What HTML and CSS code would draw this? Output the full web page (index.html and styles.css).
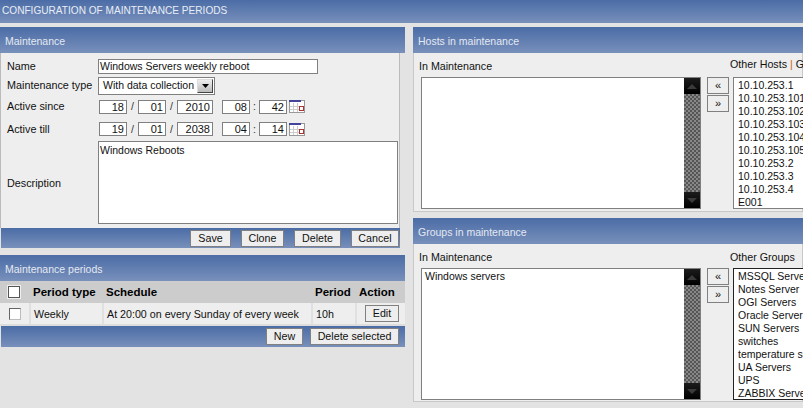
FILE: index.html
```html
<!DOCTYPE html>
<html lang="en">
<head>
<meta charset="utf-8">
<title>Configuration of maintenance periods</title>
<link rel="stylesheet" href="styles.css">
</head>
<body>
<header class="title bar-blue">CONFIGURATION OF MAINTENANCE PERIODS</header>
<main class="columns">
  <div class="col-left">
    <section class="panel form-panel">
      <h2 class="bar-blue head">Maintenance</h2>
      <div class="form-body">
        <div class="row r-name"><label>Name</label><span class="input wide">Windows Servers weekly reboot</span></div>
        <div class="row r-type"><label>Maintenance type</label>
          <span class="select">With data collection<span class="sel-btn"><svg width="7" height="4" viewBox="0 0 7 4"><path d="M0 0h7L3.500 4z" fill="#000"/></svg></span></span></div>
        <div class="row r-date"><label>Active since</label>
          <span class="date">
            <span class="input num d">18</span><i>/</i><span class="input num d">01</span><i>/</i><span class="input num y">2010</span>
            <span class="input num d h">08</span><i>:</i><span class="input num d">42</span>
            <svg class="cal" width="16" height="13" viewBox="0 0 16 13"><rect x="0.500" y="0.500" width="15" height="12" fill="#fff" stroke="#999"/><path d="M4.500 3v9M8.500 3v9M1 6.500h14M1 9.500h14" stroke="#ccc" fill="none"/><rect width="12" height="2" fill="#44449a" x="0"/><rect x="10.500" y="6.500" width="4" height="4" fill="#fff" stroke="#a33"/></svg>
          </span></div>
        <div class="row r-date r-till"><label>Active till</label>
          <span class="date">
            <span class="input num d">19</span><i>/</i><span class="input num d">01</span><i>/</i><span class="input num y">2038</span>
            <span class="input num d h">04</span><i>:</i><span class="input num d">14</span>
            <svg class="cal" width="16" height="13" viewBox="0 0 16 13"><rect x="0.500" y="0.500" width="15" height="12" fill="#fff" stroke="#999"/><path d="M4.500 3v9M8.500 3v9M1 6.500h14M1 9.500h14" stroke="#ccc" fill="none"/><rect width="12" height="2" fill="#44449a" x="0"/><rect x="10.500" y="6.500" width="4" height="4" fill="#fff" stroke="#a33"/></svg>
          </span></div>
        <div class="row r-desc"><label>Description</label><span class="textarea">Windows Reboots</span></div>
      </div>
      <div class="bar-blue foot foot-form">
        <button class="btn b-save">Save</button><button class="btn b-clone">Clone</button><button class="btn b-del">Delete</button><button class="btn b-cancel">Cancel</button>
      </div>
    </section>
    <section class="panel periods">
      <h2 class="bar-blue head">Maintenance periods</h2>
      <table class="tbl">
        <thead><tr><th class="c1"><span class="check big"></span></th><th class="c2">Period type</th><th class="c3">Schedule</th><th class="c4">Period</th><th class="c5">Action</th></tr></thead>
        <tbody><tr><td class="c1"><span class="check"></span></td><td>Weekly</td><td>At 20:00 on every Sunday of every week</td><td>10h</td><td class="c5"><button class="btn edit">Edit</button></td></tr></tbody>
      </table>
      <div class="bar-blue foot foot-periods">
        <button class="btn b-new">New</button><button class="btn b-delsel">Delete selected</button>
      </div>
    </section>
  </div>
  <div class="col-right">
    <section class="panel hosts">
      <h2 class="bar-blue head">Hosts in maintenance</h2>
      <div class="picker">
        <div class="pick-left">
          <div class="pick-label">In Maintenance</div>
          <div class="listbox">
            <div class="list-text"></div>
            <div class="scroll"><span class="sb"><svg width="10" height="5" viewBox="0 0 10 5"><path d="M0 5L5 0l5 5z" fill="#3a3a3a"/></svg></span><span class="sb"><svg width="10" height="5" viewBox="0 0 10 5"><path d="M0 0l5 5 5-5z" fill="#3a3a3a"/></svg></span></div>
          </div>
        </div>
        <div class="movers"><button class="mv">«</button><button class="mv">»</button></div>
        <div class="pick-right">
          <div class="pick-label other">Other Hosts <span class="sep">|</span> Groups</div>
          <div class="optlist">10.10.253.1<br>10.10.253.101<br>10.10.253.102<br>10.10.253.103<br>10.10.253.104<br>10.10.253.105<br>10.10.253.2<br>10.10.253.3<br>10.10.253.4<br>E001</div>
        </div>
      </div>
    </section>
    <section class="panel groups">
      <h2 class="bar-blue head">Groups in maintenance</h2>
      <div class="picker tall">
        <div class="pick-left">
          <div class="pick-label">In Maintenance</div>
          <div class="listbox">
            <div class="list-text">Windows servers</div>
            <div class="scroll"><span class="sb"><svg width="10" height="5" viewBox="0 0 10 5"><path d="M0 5L5 0l5 5z" fill="#3a3a3a"/></svg></span><span class="sb"><svg width="10" height="5" viewBox="0 0 10 5"><path d="M0 0l5 5 5-5z" fill="#3a3a3a"/></svg></span></div>
          </div>
        </div>
        <div class="movers"><button class="mv">«</button><button class="mv">»</button></div>
        <div class="pick-right">
          <div class="pick-label other">Other Groups</div>
          <div class="optlist dark">MSSQL Servers<br>Notes Server<br>OGI Servers<br>Oracle Servers<br>SUN Servers<br>switches<br>temperature sensors<br>UA Servers<br>UPS<br>ZABBIX Servers</div>
        </div>
      </div>
    </section>
  </div>
</main>
</body>
</html>
```
FILE: styles.css
```css
* { box-sizing: border-box; }
html, body { margin: 0; height: 408px; overflow: hidden; }
body { background: #e3e3e3; font: 10.500px/13px "Liberation Sans", Arial, sans-serif; color: #111; }
.bar-blue { background: linear-gradient(#4b6ca6, #7890bb); }
.title { height: 23px; padding: 3px 0 0 2px; color: #e8edf5; font-size: 10.100px; line-height: 15px; white-space: nowrap; }
.columns { display: grid; grid-template-columns: 405px 390px; column-gap: 8px; padding-top: 4px; width: 803px; overflow: hidden; }
.col-left, .col-right { display: flex; flex-direction: column; }
.head { height: 26px; margin: 0; padding: 7px 0 0 5px; font-size: 10.500px; line-height: 15px; font-weight: normal; color: #e4e9f2; }

.form-panel { height: 221px; display: flex; flex-direction: column; }
.form-body { height: 175px; width: 400px; background: #eee; border: 1px solid #bbb; border-top: 0; border-bottom: 0; padding: 4px 0 0 6px; }
.row { display: flex; align-items: center; }
.row label { flex: none; width: 91px; font-size: 10.800px; }
.r-name { height: 18px; }
.r-type { height: 21px; }
.r-date { height: 21px; }
.r-till { height: 22px; margin-top: 1px; }
.r-desc { height: 83px; margin-top: 1px; }
.r-desc label { padding-top: 2px; }
.input { display: block; background: #fff; border: 1px solid #808080; color: #111; white-space: nowrap; }
.wide { width: 220px; height: 15px; padding-left: 1px; line-height: 13px; }
.select { display: flex; align-items: center; justify-content: space-between; width: 117px; height: 18px; padding-left: 4px; background: #fff; border: 1px solid #808080; white-space: nowrap; }
.sel-btn { display: flex; align-items: center; justify-content: center; width: 16px; height: 14px; margin-right: 1px; background: linear-gradient(#eee, #bbb); border: 1px solid #444; border-top-color: #ddd; border-left-color: #ddd; }
.date { display: flex; align-items: center; margin-left: 1px; }
.date i { font-style: normal; width: 11px; text-align: center; color: #333; }
.num { height: 14px; text-align: right; padding-right: 2px; font-size: 11px; line-height: 12px; }
.d { width: 28px; }
.y { width: 36px; }
.h { margin-left: 9px; }
.date i:nth-of-type(3) { width: 9px; }
.cal { margin-left: 2px; }
.textarea { display: block; width: 300px; height: 83px; background: #fff; border: 1px solid #808080; padding: 2px 1px; }

.foot { display: flex; justify-content: flex-end; align-items: center; }
.foot-form { height: 20px; width: 399px; margin-left: 1px; padding-right: 1px; }
.foot-periods { height: 21px; width: 404px; margin-left: 1px; padding-right: 6px; }
.btn { height: 17px; padding: 0; background: #eee; border: 1px solid #808080; font: 10.700px/13px "Liberation Sans", Arial, sans-serif; color: #111; }
.b-save { width: 41px; margin-right: 10px; }
.b-clone { width: 43px; margin-right: 10px; }
.b-del { width: 47px; margin-right: 10px; }
.b-cancel { width: 48px; }
.b-new { width: 37px; margin-right: 7px; }
.b-delsel { width: 89px; }

.periods { margin-top: 7px; }
.tbl { width: 405px; height: 45px; border-collapse: collapse; table-layout: fixed; }
.tbl th { height: 22px; background: #ccc; text-align: left; font-size: 11.500px; padding: 0 0 0 3px; color: #000; }
.tbl td { height: 21px; background: #eee; border-right: 2px solid #e0e0e0; border-bottom: 2px solid #ddd; padding: 1px 0 0 3px; font-size: 10.700px; white-space: nowrap; }
.c1 { width: 30px; }
.c2 { width: 73px; }
.c3 { width: 209px; }
.c4 { width: 44px; }
.tbl th.c1 { padding-left: 8px; }
.tbl td.c1 { padding: 0 0 0 9px; }
.tbl td.c5 { padding: 0 0 0 8px; border-right: 0; }
.check { display: block; width: 12px; height: 12px; background: #fff; border: 1px solid #666; border-right-color: #bbb; border-bottom-color: #bbb; }
.big { border: 1px solid #555; box-shadow: 0 0 0 1px #eee; }
.edit { width: 34px; }

.hosts { height: 185px; }
.groups { margin-top: 6px; }
.picker { display: flex; height: 159px; background: #eee; border: 1px solid #c8c8c8; border-top: 0; padding-left: 5px; }
.tall { height: 158px; }
.pick-left { width: 282px; flex: none; }
.pick-label { height: 24px; padding-top: 6px; font-size: 10.700px; line-height: 15px; }
.pick-label.other { padding-top: 4px; margin-left: -3px; white-space: nowrap; }
.groups .pick-label.other { padding-top: 6px; }
.sep { color: #c60; }
.listbox { display: flex; height: 132px; background: #fff; border: 1px solid #808080; margin-left: 2px; }
.list-text { flex: 1; padding: 1px 3px; font-size: 10.500px; }
.scroll { flex: none; display: flex; flex-direction: column; justify-content: space-between; width: 16px; background: repeating-conic-gradient(#555 0 25%, #888 0 50%) 0 0 / 4px 4px; }
.sb { display: flex; align-items: center; justify-content: center; height: 16px; background: linear-gradient(#1c1c1c, #000); }
.movers { flex: none; display: flex; flex-direction: column; gap: 1px; width: 22px; margin: 24px 0 0 6px; }
.mv { width: 22px; height: 17px; padding: 0; background: #eee; border: 1px solid #808080; font: 11px/13px "Liberation Sans", Arial, sans-serif; color: #111; }
.pick-right { flex: none; width: 75px; margin-left: 4px; white-space: nowrap; }
.optlist { height: 132px; width: 75px; padding: 1px 0 0 4px; background: #fff; border: 1px solid #808080; border-right: 0; font-size: 10.500px; line-height: 13px; overflow: hidden; }
.dark { border-color: #222; }
```
